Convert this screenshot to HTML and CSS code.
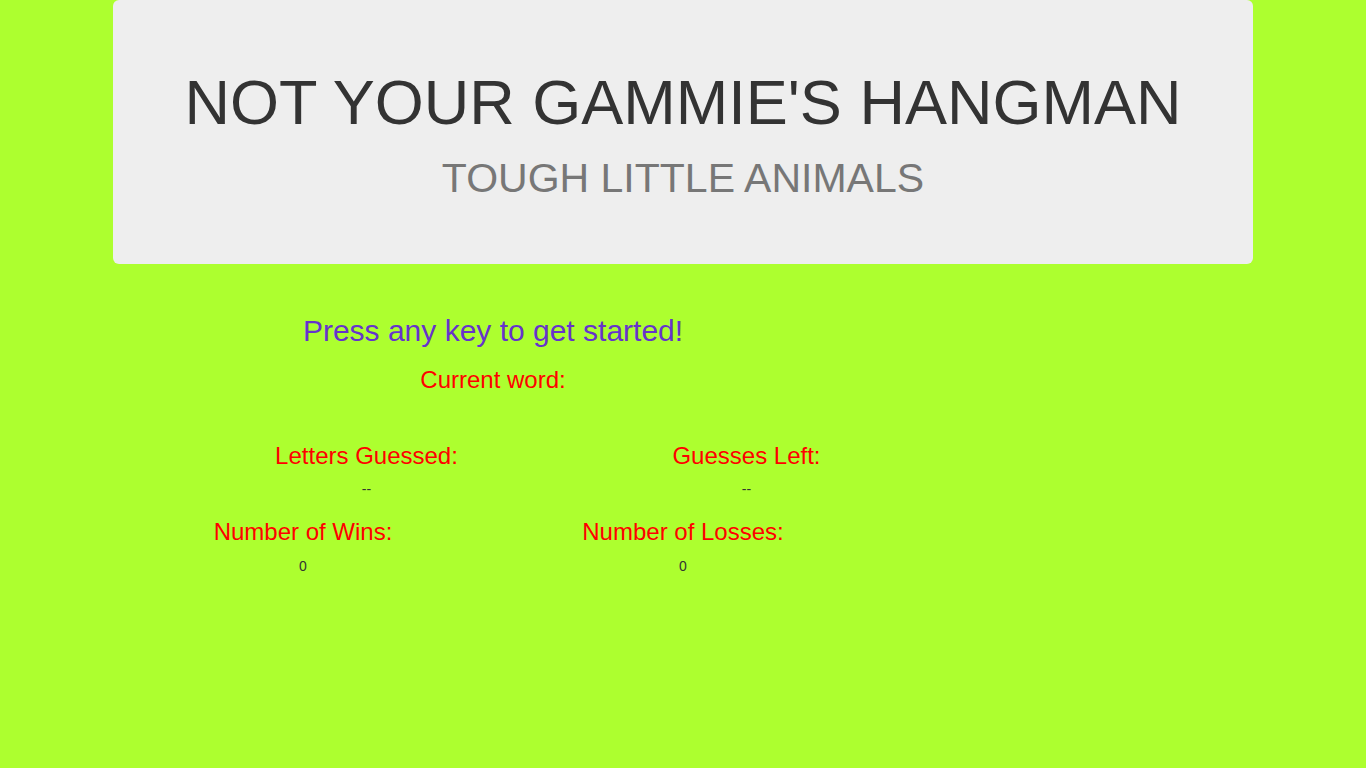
FILE: index.html
```html
<!DOCTYPE html>
<html lang="en">
<head>
<meta charset="utf-8">
<title>Not Your Gammie's Hangman</title>
<link rel="stylesheet" href="styles.css">
</head>
<body>
<div class="container">
  <header class="jumbotron">
    <h1 class="title">NOT YOUR GAMMIE'S HANGMAN</h1>
    <h2 class="subtitle">TOUGH LITTLE ANIMALS</h2>
  </header>
  <main class="game">
    <h2 class="prompt">Press any key to get started!</h2>
    <h3 class="label">Current word:</h3>
    <p class="value word"></p>
    <div class="stats stats-guess">
      <div class="stat">
        <h3 class="label">Letters Guessed:</h3>
        <p class="value">--</p>
      </div>
      <div class="stat">
        <h3 class="label">Guesses Left:</h3>
        <p class="value">--</p>
      </div>
    </div>
    <div class="stats stats-score">
      <div class="stat">
        <h3 class="label">Number of Wins:</h3>
        <p class="value">0</p>
      </div>
      <div class="stat">
        <h3 class="label">Number of Losses:</h3>
        <p class="value">0</p>
      </div>
    </div>
  </main>
</div>
</body>
</html>
```

FILE: styles.css
```css
html, body {
  margin: 0;
  padding: 0;
}
body {
  background: #adff2f;
  font-family: "Liberation Sans", Arial, Helvetica, sans-serif;
  font-size: 14px;
  line-height: 20px;
  color: #333;
}
.container {
  width: 1140px;
  margin: 0 auto;
  display: flex;
  flex-direction: column;
}
.jumbotron {
  background: #eee;
  border-radius: 6px;
  padding: 48px 60px 63px;
  text-align: center;
  display: flex;
  flex-direction: column;
}
.title {
  margin: 20px 0 0;
  font-size: 63px;
  line-height: 1.1;
  font-weight: normal;
  color: #333;
}
.subtitle {
  margin: 19px 0 0;
  font-size: 41px;
  line-height: 1.1;
  font-weight: normal;
  color: #777;
}
.game {
  width: 760px;
  margin-top: 30px;
  display: flex;
  flex-direction: column;
  text-align: center;
}
.prompt {
  margin: 20px 0 0;
  font-size: 30px;
  line-height: 33px;
  font-weight: normal;
  color: #6633cc;
}
.label {
  margin: 20px 0 0;
  font-size: 24px;
  line-height: 26.4px;
  font-weight: normal;
  color: #ff0000;
}
.value {
  margin: 10px 0 0;
  height: 20px;
  font-size: 14px;
  line-height: 20px;
  color: #333;
}
.stats {
  display: grid;
}
.stats-guess {
  margin-top: -1px;
  padding-left: 127px;
  grid-template-columns: 253px 127px 253px;
}
.stats-guess .stat:last-child {
  grid-column: 3;
}
.stats-score {
  grid-template-columns: 380px 380px;
}
.stat {
  display: flex;
  flex-direction: column;
}
```
